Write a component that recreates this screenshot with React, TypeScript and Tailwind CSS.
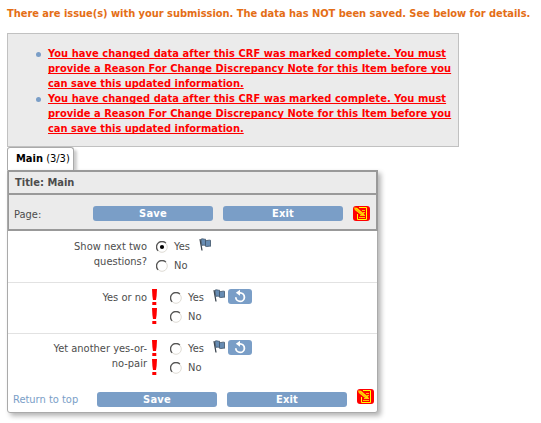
import React from "react";

const warning = [
  { text: "You have changed data after this CRF was marked complete. You must", spacing: "tracking-[0.055px]" },
  { text: "provide a Reason For Change Discrepancy Note for this Item before you", spacing: "tracking-[0.025px]" },
  { text: "can save this updated information.", spacing: "tracking-[0px]" },
];

function NoteIcon() {
  return (
    <svg className="block h-[15px] w-[17px] shrink-0" viewBox="0 0 17 15">
      <rect width="17" height="15" rx="3" fill="#f00" />
      <path d="M6 1.5h7.5v12h-9V8" fill="none" stroke="#ff0" />
      <path d="M9 4.5h3M10 6.5h2M7 9.5h5M6 11.5h6" stroke="#ffc000" />
      <path d="M1 1.5l3 .2 7.5 6.2-.5 1.6-2.5-.2L1.8 4z" fill="#ffd800" />
      <path d="M2 2.5l7 5.5" stroke="#f80" strokeWidth=".5" />
    </svg>
  );
}

function Flag() {
  return (
    <svg className="block h-[13px] w-[13px] shrink-0" viewBox="0 0 13 13">
      <path d="M1 1.2l2 11.3" stroke="#3d4650" strokeWidth="1.3" />
      <path d="M2 1.2c2-1 3 .3 4.5 0v6C5 7.8 4 6.5 2.8 7.7z" fill="#678cb3" stroke="#3f5368" strokeWidth=".8" />
      <path d="M6.5 2.5c2 .4 3-.8 5-.2v6c-2-.6-3 .7-5 0z" fill="#678cb3" stroke="#3f5368" strokeWidth=".8" />
    </svg>
  );
}

function Undo() {
  return (
    <svg className="block h-[15px] w-6 shrink-0" viewBox="0 0 24 15">
      <rect width="24" height="15" rx="3" fill="#7a9ec7" />
      <path d="M11.5 3.8h.7a4.3 4.3 0 1 1-4.4 4.4" fill="none" stroke="#fff" strokeWidth="1.8" />
      <path d="M12 .8v6L7.8 3.8z" fill="#fff" />
    </svg>
  );
}

function Bang() {
  return (
    <svg className="block h-4 w-[5px] shrink-0" viewBox="0 0 5 16">
      <path d="M0 0h5L4.6 7 4 11H1L.4 7zM.3 13h4v3h-4z" fill="#f00" />
    </svg>
  );
}

function Radio({ on = false }: { on?: boolean }) {
  return (
    <svg className="block h-3 w-3 shrink-0" viewBox="0 0 12 12">
      <circle cx="6" cy="6" r="5.3" fill="#fff" stroke="#dedbd4" />
      <path d="M2.1 9.9A5.5 5.5 0 0 1 9.9 2.1" fill="none" stroke="#555" strokeWidth="1.3" />
      {on && <circle cx="6" cy="6" r="2.1" fill="#000" />}
    </svg>
  );
}

function Button({ label }: { label: string }) {
  return (
    <button className="block h-[15px] w-[120px] shrink-0 rounded-[3px] bg-[#7a9ec7] text-center text-[11px] leading-[15px] font-bold tracking-[0.2px] text-white">
      {label}
    </button>
  );
}

function Option({ label, on = false }: { label: string; on?: boolean }) {
  return (
    <div className="flex h-[15px] w-[43px] items-start">
      <div className="pt-[2px]"><Radio on={on} /></div>
      <span className="ml-[6px] leading-[15px] tracking-[0.1px]">{label}</span>
    </div>
  );
}

function Question({ lines, required = false, checked = false }: { lines: string[]; required?: boolean; checked?: boolean }) {
  return (
    <div className="flex h-[51px] border-b border-[#e2e2e2] pt-[6px] last:border-0">
      <div className="w-[139px] shrink-0 pt-px text-right">
        {lines.map((line) => (
          <div key={line} className="h-[15px] leading-[15px] whitespace-nowrap">{line}</div>
        ))}
      </div>
      {required && (
        <div className="ml-[5px] flex w-[5px] flex-col gap-[3px]">
          <Bang />
          <Bang />
        </div>
      )}
      <div className={required ? "ml-[13px]" : "ml-[9px]"}>
        <div className="flex h-[19px] items-start">
          <div className="pt-px"><Option label="Yes" on={checked} /></div>
          <Flag />
          {required && <div className="ml-[2px]"><Undo /></div>}
        </div>
        <div className="pt-px"><Option label="No" /></div>
      </div>
    </div>
  );
}

export default function App() {
  return (
    <main className="h-[423px] w-[541px] overflow-hidden bg-white pl-[7px] font-['DejaVu_Sans_Condensed','DejaVu_Sans',sans-serif] text-[11px] text-[#4d4d4d]">
      <h1 className="h-[33px] pt-[6px] leading-[16px] font-bold tracking-[-0.03px] whitespace-nowrap text-[#e46e16]">
        There are issue(s) with your submission. The data has NOT been saved. See below for details.
      </h1>
      <section className="h-[114px] w-[452px] border border-[#c1c1c1] bg-[#ebebeb] pt-3 pl-7">
        <ul>
          {[0, 1].map((item) => (
            <li key={item} className="flex">
              <span className="mt-[6px] h-[5px] w-[5px] rounded-full bg-[#7a9ec7]" />
              <a className="ml-[7px] font-bold whitespace-nowrap text-[#f00] underline decoration-1 underline-offset-1 [text-decoration-skip-ink:none]">
                {warning.map((line) => (
                  <span key={line.text} className={`block h-[15px] leading-[15px] ${line.spacing}`}>{line.text}</span>
                ))}
              </a>
            </li>
          ))}
        </ul>
      </section>
      <div className="h-[23px] w-[67px] rounded-t-[3px] border-x border-t border-[#aaa] bg-white pt-[3px] pl-2 leading-[15px] whitespace-nowrap text-black shadow-[4px_2px_3px_-1px_#ccc]">
        <b>Main</b> <span>(3/3)</span>
      </div>
      <section className="relative h-[243px] w-[371px] rounded-b-[3px] border border-[#aaa] bg-white shadow-[3px_3px_5px_#b5b5b5]">
        <header className="-mt-px -mr-px h-[61px] border-t-2 border-r-2 border-b-2 border-l border-[#999] bg-[#ebebeb]">
          <div className="h-[23px] border-b-2 border-[#999] pt-[3px] pl-[6px] leading-[15px] font-bold">Title: Main</div>
          <div className="flex h-[34px] items-start pt-[11px] pl-[5px]">
            <span className="w-[79px] pt-px leading-[15px]">Page:</span>
            <Button label="Save" />
            <div className="ml-[10px]"><Button label="Exit" /></div>
            <div className="ml-[10px]"><NoteIcon /></div>
          </div>
        </header>
        <div className="pt-px">
          <Question lines={["Show next two", "questions?"]} checked />
          <Question lines={["Yes or no"]} required />
          <Question lines={["Yet another yes-or-", "no-pair"]} required />
        </div>
        <footer className="flex h-6 items-start pl-[5px]">
          <a className="mt-[7px] w-[84px] leading-[15px] whitespace-nowrap text-[#7a9ec7]">Return to top</a>
          <div className="mt-[7px]"><Button label="Save" /></div>
          <div className="mt-[7px] ml-[10px]"><Button label="Exit" /></div>
          <div className="mt-[4px] ml-[10px]"><NoteIcon /></div>
        </footer>
      </section>
    </main>
  );
}
